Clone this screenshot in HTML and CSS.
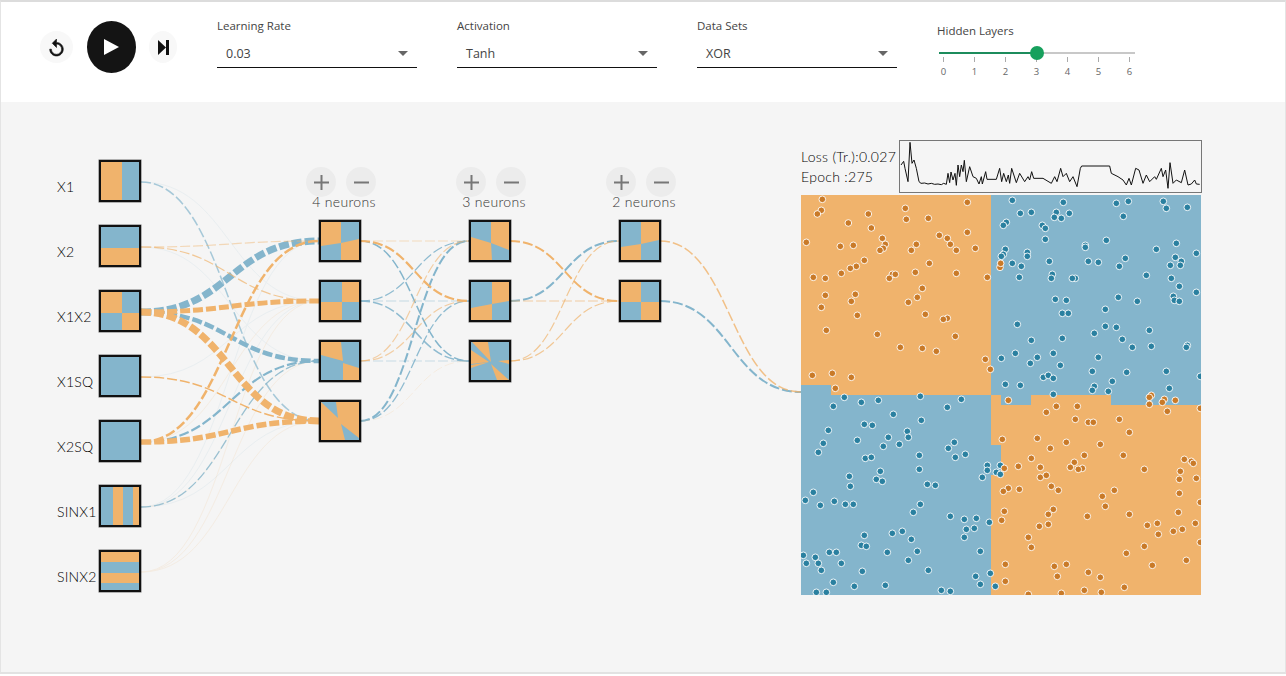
FILE: index.html
```html
<!DOCTYPE html>
<html lang="en">
<head>
<meta charset="utf-8">
<title>Neural Network Playground</title>
<link rel="stylesheet" href="styles.css">
</head>
<body>
<div class="app">
  <header class="toolbar">
    <div class="transport">
      <button class="round small reset" type="button" aria-label="Reset">
        <svg class="icon-reset" viewBox="4 1 16 20"><path d="M12 5V1L7 6l5 5V7c3.31 0 6 2.69 6 6s-2.69 6-6 6-6-2.69-6-6H4c0 4.42 3.58 8 8 8s8-3.58 8-8-3.58-8-8-8z"/></svg>
      </button>
      <button class="round play" type="button" aria-label="Play">
        <svg class="icon-play" viewBox="0 0 15 16"><path d="M0 0L15 8L0 16z"/></svg>
      </button>
      <button class="round small step" type="button" aria-label="Step">
        <svg class="icon-step" viewBox="0 0 11 15"><path d="M0 0L8 7.5L0 15zM8 0h3v15H8z"/></svg>
      </button>
    </div>
    <div class="field">
      <div class="field-label">Learning Rate</div>
      <div class="select"><span>0.03</span><i class="caret"></i></div>
    </div>
    <div class="field">
      <div class="field-label">Activation</div>
      <div class="select"><span>Tanh</span><i class="caret"></i></div>
    </div>
    <div class="field">
      <div class="field-label">Data Sets</div>
      <div class="select"><span>XOR</span><i class="caret"></i></div>
    </div>
    <div class="slider">
      <div class="slider-label">Hidden Layers</div>
      <div class="track"><div class="track-fill"></div><div class="thumb"></div></div>
      <div class="ticks">
        <div class="tick">0</div><div class="tick">1</div><div class="tick">2</div><div class="tick">3</div><div class="tick">4</div><div class="tick">5</div><div class="tick">6</div>
      </div>
    </div>
  </header>

  <main class="stage">
    <svg class="edges" viewBox="1 102 1284 570" aria-hidden="true">
      <g class="faint-b">
        <path d="M141 377C230 377 230 301 319 301"/>
        <path d="M141 507C230 507 230 241 319 241"/>
        <path d="M141 507C230 507 230 301 319 301"/>
        <path d="M141 507C230 507 230 421 319 421"/>
        <path d="M141 247C230 247 230 361 319 361"/>
        <path d="M141 182C230 182 230 301 319 301"/>
      </g>
      <g class="faint-o">
        <path d="M141 572C230 572 230 421 319 421"/>
        <path d="M141 572C230 572 230 361 319 361"/>
        <path d="M141 572C230 572 230 301 319 301"/>
        <path d="M141 442C230 442 230 301 319 301"/>
        <path d="M141 507C230 507 230 361 319 361"/>
      </g>
      <g class="blue">
        <path d="M141 182C230 182 230 421 319 421" stroke-width="1.500" opacity=".7"/>
        <path d="M141 312C230 312 230 241 319 241" stroke-width="7"/>
        <path d="M141 312C230 312 230 361 319 361" stroke-width="4.500"/>
        <path d="M141 442C230 442 230 361 319 361" stroke-width="2.200"/>
        <path d="M141 507C230 507 230 361 319 361" stroke-width="1.300" opacity=".8"/>
        <path d="M360 241C414.500 241 414.500 361 469 361" stroke-width="1.500"/>
        <path d="M360 301C414.500 301 414.500 241 469 241" stroke-width="1.200" opacity=".9"/>
        <path d="M360 301C414.500 301 414.500 301 469 301" stroke-width="1.200" opacity=".45"/>
        <path d="M360 301C414.500 301 414.500 361 469 361" stroke-width="1.500" opacity=".9"/>
        <path d="M360 361C414.500 361 414.500 361 469 361" stroke-width="1.200" opacity=".4"/>
        <path d="M360 421C414.500 421 414.500 241 469 241" stroke-width="2"/>
        <path d="M360 421C414.500 421 414.500 301 469 301" stroke-width="1.300" opacity=".9"/>
        <path d="M510 301C564.500 301 564.500 241 619 241" stroke-width="2"/>
        <path d="M660 301C730.500 301 730.500 392 801 392" stroke-width="2"/>
      </g>
      <g class="orange">
        <path d="M141 247C230 247 230 241 319 241" stroke-width="1.200" opacity=".45"/>
        <path d="M141 247C230 247 230 301 319 301" stroke-width="1.200" opacity=".7"/>
        <path d="M141 312C230 312 230 301 319 301" stroke-width="5"/>
        <path d="M141 312C230 312 230 421 319 421" stroke-width="7"/>
        <path d="M141 377C230 377 230 421 319 421" stroke-width="1.500"/>
        <path d="M141 442C230 442 230 421 319 421" stroke-width="5.500"/>
        <path d="M141 442C230 442 230 241 319 241" stroke-width="2.500"/>
        <path d="M360 241C414.500 241 414.500 241 469 241" stroke-width="1.200" opacity=".4"/>
        <path d="M360 241C414.500 241 414.500 301 469 301" stroke-width="2.200"/>
        <path d="M360 361C414.500 361 414.500 241 469 241" stroke-width="1.200" opacity=".6"/>
        <path d="M360 361C414.500 361 414.500 301 469 301" stroke-width="1.200" opacity=".6"/>
        <path d="M360 421C414.500 421 414.500 361 469 361" stroke-width="1" opacity=".15"/>
        <path d="M510 241C564.500 241 564.500 301 619 301" stroke-width="2"/>
        <path d="M510 301C564.500 301 564.500 301 619 301" stroke-width="1.200" opacity=".6"/>
        <path d="M510 361C564.500 361 564.500 241 619 241" stroke-width="1.200" opacity=".7"/>
        <path d="M510 361C564.500 361 564.500 301 619 301" stroke-width="1.200" opacity=".7"/>
        <path d="M660 241C730.500 241 730.500 392 801 392" stroke-width="1.500" opacity=".8"/>
      </g>
    </svg>

    <section class="inputs">
      <div class="input-row"><span class="input-name">X1</span>
        <div class="node"><svg class="map" viewBox="0 0 38 38"><rect class="bg-o" width="38" height="38"/><rect class="bg-b" x="21" width="17" height="38"/></svg></div></div>
      <div class="input-row"><span class="input-name">X2</span>
        <div class="node"><svg class="map" viewBox="0 0 38 38"><rect class="bg-b" width="38" height="38"/><rect class="bg-o" y="21" width="38" height="17"/></svg></div></div>
      <div class="input-row"><span class="input-name">X1X2</span>
        <div class="node"><svg class="map" viewBox="0 0 38 38"><rect class="bg-b" width="38" height="38"/><rect class="bg-o" width="21" height="21"/><rect class="bg-o" x="21" y="21" width="17" height="17"/></svg></div></div>
      <div class="input-row"><span class="input-name">X1SQ</span>
        <div class="node"><svg class="map" viewBox="0 0 38 38"><rect class="bg-b" width="38" height="38"/></svg></div></div>
      <div class="input-row"><span class="input-name">X2SQ</span>
        <div class="node"><svg class="map" viewBox="0 0 38 38"><rect class="bg-b" width="38" height="38"/></svg></div></div>
      <div class="input-row"><span class="input-name">SINX1</span>
        <div class="node"><svg class="map" viewBox="0 0 38 38"><rect class="bg-b" width="38" height="38"/><rect class="bg-o" x="12" width="10" height="38"/><rect class="bg-o" x="32" width="6" height="38"/></svg></div></div>
      <div class="input-row"><span class="input-name">SINX2</span>
        <div class="node"><svg class="map" viewBox="0 0 38 38"><rect class="bg-b" width="38" height="38"/><rect class="bg-o" width="38" height="10"/><rect class="bg-o" y="21" width="38" height="10"/></svg></div></div>
    </section>

    <section class="layer">
      <div class="layer-buttons">
        <button class="adjust" type="button" aria-label="Add neuron"><svg class="adjust-icon" viewBox="0 0 15 15"><path d="M7.500 0V15M0 7.500H15"/></svg></button>
        <button class="adjust" type="button" aria-label="Remove neuron"><svg class="adjust-icon" viewBox="0 0 15 15"><path d="M0 7.500H15"/></svg></button>
      </div>
      <div class="layer-count">4 neurons</div>
      <div class="layer-nodes">
        <div class="node"><svg class="map" viewBox="0 0 38 38"><rect class="bg-b" width="38" height="38"/><path class="bg-o" d="M0 0H20V21L0 24zM20 21L38 17V38H20z"/></svg></div>
        <div class="node"><svg class="map" viewBox="0 0 38 38"><rect class="bg-b" width="38" height="38"/><path class="bg-o" d="M21 0H38V20H21zM0 20H21V38H0z"/></svg></div>
        <div class="node"><svg class="map" viewBox="0 0 38 38"><rect class="bg-b" width="38" height="38"/><path class="bg-o" d="M0 0H20L22 19L0 13zM22 21L38 26V38H22z"/></svg></div>
        <div class="node"><svg class="map" viewBox="0 0 38 38"><rect class="bg-o" width="38" height="38"/><path class="bg-b" d="M0 0H15L17 16zM20 22L38 36V38H24z"/></svg></div>
      </div>
    </section>

    <section class="layer">
      <div class="layer-buttons">
        <button class="adjust" type="button" aria-label="Add neuron"><svg class="adjust-icon" viewBox="0 0 15 15"><path d="M7.500 0V15M0 7.500H15"/></svg></button>
        <button class="adjust" type="button" aria-label="Remove neuron"><svg class="adjust-icon" viewBox="0 0 15 15"><path d="M0 7.500H15"/></svg></button>
      </div>
      <div class="layer-count">3 neurons</div>
      <div class="layer-nodes">
        <div class="node"><svg class="map" viewBox="0 0 38 38"><rect class="bg-b" width="38" height="38"/><path class="bg-o" d="M20 0H38V28L20 21zM0 15L20 21L21 38H0z"/></svg></div>
        <div class="node"><svg class="map" viewBox="0 0 38 38"><rect class="bg-b" width="38" height="38"/><path class="bg-o" d="M21 0H38V19L21 22zM0 26L21 22V38H0z"/></svg></div>
        <div class="node"><svg class="map" viewBox="0 0 38 38"><rect class="bg-b" width="38" height="38"/><path class="bg-o" d="M1 0H17L20 20zM0 8L18 20L0 22zM0 23L18 20L0 26zM27 19L38 18V22zM20 22L38 38H26z"/></svg></div>
      </div>
    </section>

    <section class="layer">
      <div class="layer-buttons">
        <button class="adjust" type="button" aria-label="Add neuron"><svg class="adjust-icon" viewBox="0 0 15 15"><path d="M7.500 0V15M0 7.500H15"/></svg></button>
        <button class="adjust" type="button" aria-label="Remove neuron"><svg class="adjust-icon" viewBox="0 0 15 15"><path d="M0 7.500H15"/></svg></button>
      </div>
      <div class="layer-count">2 neurons</div>
      <div class="layer-nodes">
        <div class="node"><svg class="map" viewBox="0 0 38 38"><rect class="bg-b" width="38" height="38"/><path class="bg-o" d="M20 0H38V18L20 22zM0 25L20 22V38H0z"/></svg></div>
        <div class="node"><svg class="map" viewBox="0 0 38 38"><rect class="bg-b" width="38" height="38"/><path class="bg-o" d="M0 0H20V20H0zM20 20H38V38H20z"/></svg></div>
      </div>
    </section>

    <section class="output">
      <div class="stats">
        <div class="stat-text"><div>Loss (Tr.):0.027</div><div>Epoch :275</div></div>
        <div class="chart">
          <svg class="chart-line" viewBox="121 423 903 153" preserveAspectRatio="none"><polyline points="124,495 132,484 136,505 145,545 151,427 157,490 163,480 170,505 178,545 184,550 195,549 205,552 215,550 225,553 235,552 245,554 252,550 260,553 265,520 270,548 274,516 280,540 286,520 290,556 295,495 300,530 305,495 310,515 314,481 320,545 330,500 340,530 350,535 358,552 365,530 368,552 378,515 382,538 410,538 420,505 426,545 432,520 440,545 446,525 450,550 456,505 470,548 480,520 495,545 505,530 510,540 516,515 522,535 550,535 575,550 585,530 592,545 603,505 610,530 620,520 630,545 640,530 652,560 662,505 666,498 750,498 755,520 775,530 790,540 800,555 808,535 815,555 828,505 838,510 850,550 860,525 870,545 885,530 890,538 905,505 910,530 918,510 925,565 931,488 940,550 950,540 965,548 975,510 985,555 995,552 1005,540 1010,552 1020,553"/></svg>
        </div>
      </div>
      <svg class="decision" viewBox="801 195 400 400" role="img" aria-label="Decision boundary">
        <rect class="bg-b" x="801" y="195" width="400" height="400"/>
        <path class="bg-o" d="M801 195H991V395H831V385H801z"/>
        <path class="bg-o" d="M991 395H1001V405H1031V395H1111V405H1201V595H991V475H1001V445H991z"/>
        <g class="dots-o" transform="translate(800 190) scale(.33333)">
          <circle cx="67" cy="28"/><circle cx="64" cy="61"/><circle cx="52" cy="72"/><circle cx="205" cy="72"/><circle cx="316" cy="55"/><circle cx="319" cy="88"/><circle cx="385" cy="85"/><circle cx="502" cy="37"/><circle cx="145" cy="99"/><circle cx="214" cy="114"/><circle cx="502" cy="127"/><circle cx="418" cy="136"/><circle cx="442" cy="145"/><circle cx="247" cy="145"/><circle cx="19" cy="157"/><circle cx="121" cy="169"/><circle cx="160" cy="166"/><circle cx="256" cy="163"/><circle cx="250" cy="175"/><circle cx="240" cy="181"/><circle cx="349" cy="163"/><circle cx="334" cy="181"/><circle cx="451" cy="163"/><circle cx="469" cy="181"/><circle cx="526" cy="175"/><circle cx="193" cy="211"/><circle cx="169" cy="229"/><circle cx="151" cy="235"/><circle cx="124" cy="250"/><circle cx="388" cy="220"/><circle cx="346" cy="247"/><circle cx="469" cy="250"/><circle cx="562" cy="262"/><circle cx="40" cy="262"/><circle cx="76" cy="265"/><circle cx="277" cy="253"/><circle cx="286" cy="253"/><circle cx="268" cy="265"/><circle cx="367" cy="295"/><circle cx="76" cy="316"/><circle cx="166" cy="313"/><circle cx="154" cy="334"/><circle cx="352" cy="322"/><circle cx="325" cy="337"/><circle cx="64" cy="352"/><circle cx="172" cy="376"/><circle cx="376" cy="373"/><circle cx="442" cy="385"/><circle cx="430" cy="388"/><circle cx="79" cy="421"/><circle cx="232" cy="433"/><circle cx="466" cy="439"/><circle cx="301" cy="472"/><circle cx="367" cy="475"/><circle cx="409" cy="484"/><circle cx="556" cy="508"/><circle cx="571" cy="538"/><circle cx="37" cy="556"/><circle cx="97" cy="550"/><circle cx="154" cy="562"/><circle cx="106" cy="595"/>
        </g>
        <g class="dots-b" transform="translate(1000 190) scale(.33333)">
          <circle cx="37" cy="31"/><circle cx="190" cy="37"/><circle cx="349" cy="40"/><circle cx="385" cy="34"/><circle cx="490" cy="34"/><circle cx="499" cy="55"/><circle cx="562" cy="52"/><circle cx="61" cy="70"/><circle cx="94" cy="67"/><circle cx="169" cy="67"/><circle cx="163" cy="82"/><circle cx="184" cy="85"/><circle cx="208" cy="70"/><circle cx="370" cy="79"/><circle cx="19" cy="97"/><circle cx="10" cy="106"/><circle cx="127" cy="106"/><circle cx="136" cy="115"/><circle cx="136" cy="148"/><circle cx="319" cy="151"/><circle cx="256" cy="166"/><circle cx="256" cy="172"/><circle cx="529" cy="160"/><circle cx="469" cy="178"/><circle cx="16" cy="178"/><circle cx="10" cy="193"/><circle cx="4" cy="199"/><circle cx="82" cy="187"/><circle cx="82" cy="199"/><circle cx="589" cy="190"/><circle cx="526" cy="202"/><circle cx="376" cy="205"/><circle cx="544" cy="214"/><circle cx="541" cy="226"/><circle cx="511" cy="226"/><circle cx="148" cy="214"/><circle cx="265" cy="214"/><circle cx="295" cy="217"/><circle cx="37" cy="220"/><circle cx="64" cy="229"/><circle cx="358" cy="229"/><circle cx="157" cy="253"/><circle cx="154" cy="265"/><circle cx="226" cy="265"/><circle cx="217" cy="265"/><circle cx="58" cy="262"/><circle cx="439" cy="256"/><circle cx="514" cy="265"/><circle cx="538" cy="289"/><circle cx="589" cy="307"/><circle cx="520" cy="319"/><circle cx="523" cy="331"/><circle cx="538" cy="334"/><circle cx="166" cy="328"/><circle cx="199" cy="331"/><circle cx="355" cy="322"/><circle cx="412" cy="334"/><circle cx="316" cy="358"/><circle cx="187" cy="370"/><circle cx="205" cy="370"/><circle cx="52" cy="403"/><circle cx="316" cy="409"/><circle cx="349" cy="412"/><circle cx="283" cy="430"/><circle cx="448" cy="421"/><circle cx="187" cy="445"/><circle cx="94" cy="451"/><circle cx="367" cy="448"/><circle cx="397" cy="472"/><circle cx="454" cy="469"/><circle cx="562" cy="466"/><circle cx="559" cy="472"/><circle cx="46" cy="490"/><circle cx="160" cy="490"/><circle cx="4" cy="505"/><circle cx="112" cy="502"/><circle cx="91" cy="520"/><circle cx="295" cy="502"/><circle cx="181" cy="526"/><circle cx="277" cy="544"/><circle cx="380" cy="547"/><circle cx="499" cy="544"/><circle cx="130" cy="562"/><circle cx="145" cy="556"/><circle cx="160" cy="565"/><circle cx="337" cy="574"/><circle cx="601" cy="559"/><circle cx="16" cy="583"/><circle cx="61" cy="586"/><circle cx="283" cy="589"/><circle cx="277" cy="601"/><circle cx="325" cy="604"/><circle cx="508" cy="595"/><circle cx="160" cy="613"/>
        </g>
        <g class="dots-o" transform="translate(1000 190) scale(.33333)">
          <circle cx="0" cy="232"/><circle cx="2" cy="220"/>
        </g>
        <g class="dots-b" transform="translate(800 390) scale(.33333)">
          <circle cx="133" cy="22"/><circle cx="184" cy="37"/><circle cx="235" cy="31"/><circle cx="361" cy="19"/><circle cx="484" cy="28"/><circle cx="100" cy="49"/><circle cx="442" cy="52"/><circle cx="280" cy="73"/><circle cx="364" cy="91"/><circle cx="193" cy="103"/><circle cx="217" cy="106"/><circle cx="85" cy="121"/><circle cx="322" cy="124"/><circle cx="265" cy="142"/><circle cx="325" cy="142"/><circle cx="172" cy="151"/><circle cx="70" cy="160"/><circle cx="298" cy="163"/><circle cx="250" cy="169"/><circle cx="463" cy="157"/><circle cx="445" cy="175"/><circle cx="55" cy="187"/><circle cx="358" cy="196"/><circle cx="496" cy="193"/><circle cx="466" cy="202"/><circle cx="196" cy="205"/><circle cx="214" cy="202"/><circle cx="562" cy="226"/><circle cx="601" cy="226"/><circle cx="562" cy="241"/><circle cx="589" cy="247"/><circle cx="601" cy="253"/><circle cx="241" cy="244"/><circle cx="358" cy="238"/><circle cx="148" cy="259"/><circle cx="229" cy="268"/><circle cx="247" cy="274"/><circle cx="547" cy="262"/><circle cx="151" cy="289"/><circle cx="382" cy="283"/><circle cx="406" cy="286"/><circle cx="40" cy="307"/><circle cx="16" cy="331"/><circle cx="103" cy="334"/><circle cx="61" cy="346"/><circle cx="136" cy="343"/><circle cx="160" cy="343"/><circle cx="361" cy="343"/><circle cx="340" cy="367"/><circle cx="451" cy="379"/><circle cx="493" cy="388"/><circle cx="529" cy="385"/><circle cx="568" cy="397"/><circle cx="499" cy="418"/><circle cx="523" cy="415"/><circle cx="493" cy="442"/><circle cx="193" cy="436"/><circle cx="277" cy="430"/><circle cx="307" cy="424"/><circle cx="334" cy="448"/><circle cx="184" cy="466"/><circle cx="199" cy="469"/><circle cx="88" cy="487"/><circle cx="109" cy="487"/><circle cx="262" cy="487"/><circle cx="352" cy="484"/><circle cx="10" cy="496"/><circle cx="46" cy="502"/><circle cx="541" cy="484"/><circle cx="19" cy="520"/><circle cx="55" cy="520"/><circle cx="124" cy="520"/><circle cx="325" cy="511"/><circle cx="64" cy="541"/><circle cx="187" cy="544"/><circle cx="385" cy="541"/><circle cx="571" cy="550"/><circle cx="527" cy="559"/><circle cx="100" cy="577"/><circle cx="163" cy="589"/><circle cx="256" cy="586"/><circle cx="541" cy="583"/><circle cx="586" cy="589"/><circle cx="424" cy="601"/><circle cx="451" cy="604"/><circle cx="49" cy="607"/><circle cx="79" cy="607"/>
        </g>
        <g class="dots-o" transform="translate(1000 390) scale(.33333)">
          <circle cx="454" cy="16"/><circle cx="448" cy="22"/><circle cx="493" cy="28"/><circle cx="487" cy="37"/><circle cx="526" cy="31"/><circle cx="448" cy="43"/><circle cx="502" cy="64"/><circle cx="601" cy="55"/><circle cx="25" cy="31"/><circle cx="169" cy="49"/><circle cx="232" cy="49"/><circle cx="139" cy="67"/><circle cx="226" cy="88"/><circle cx="265" cy="97"/><circle cx="280" cy="97"/><circle cx="358" cy="88"/><circle cx="388" cy="127"/><circle cx="112" cy="145"/><circle cx="7" cy="148"/><circle cx="199" cy="157"/><circle cx="301" cy="163"/><circle cx="151" cy="175"/><circle cx="253" cy="196"/><circle cx="370" cy="196"/><circle cx="94" cy="205"/><circle cx="223" cy="217"/><circle cx="55" cy="229"/><circle cx="13" cy="235"/><circle cx="121" cy="232"/><circle cx="211" cy="232"/><circle cx="247" cy="235"/><circle cx="235" cy="238"/><circle cx="433" cy="238"/><circle cx="553" cy="208"/><circle cx="574" cy="214"/><circle cx="580" cy="220"/><circle cx="541" cy="244"/><circle cx="589" cy="265"/><circle cx="538" cy="268"/><circle cx="121" cy="262"/><circle cx="139" cy="256"/><circle cx="154" cy="289"/><circle cx="175" cy="301"/><circle cx="25" cy="295"/><circle cx="10" cy="304"/><circle cx="58" cy="298"/><circle cx="343" cy="301"/><circle cx="307" cy="319"/><circle cx="538" cy="310"/><circle cx="601" cy="337"/><circle cx="316" cy="349"/><circle cx="13" cy="364"/><circle cx="160" cy="358"/><circle cx="145" cy="373"/><circle cx="262" cy="379"/><circle cx="388" cy="373"/><circle cx="535" cy="367"/><circle cx="5" cy="391"/><circle cx="145" cy="403"/><circle cx="118" cy="409"/><circle cx="442" cy="406"/><circle cx="472" cy="400"/><circle cx="586" cy="400"/><circle cx="547" cy="418"/><circle cx="520" cy="424"/><circle cx="475" cy="433"/><circle cx="85" cy="442"/><circle cx="94" cy="472"/><circle cx="433" cy="469"/><circle cx="601" cy="457"/><circle cx="379" cy="490"/><circle cx="559" cy="511"/><circle cx="16" cy="523"/><circle cx="163" cy="529"/><circle cx="199" cy="523"/><circle cx="457" cy="526"/><circle cx="265" cy="547"/><circle cx="172" cy="559"/><circle cx="301" cy="562"/><circle cx="16" cy="574"/><circle cx="373" cy="592"/><circle cx="85" cy="613"/><circle cx="184" cy="610"/><circle cx="253" cy="601"/><circle cx="304" cy="607"/>
        </g>
      </svg>
    </section>
  </main>
</div>
</body>
</html>
```
FILE: styles.css
```css
* { box-sizing: border-box; }

html, body { margin: 0; padding: 0; background: #fff; }

body { font-family: "Open Sans", "Liberation Sans", sans-serif; color: #333; }

.app {
  width: 1286px;
  height: 674px;
  display: flex;
  flex-direction: column;
  overflow: hidden;
  border: 1px solid #e4e4e4;
  border-top: 2px solid #dcdcdc;
  border-bottom: 2px solid #e2e2e2;
}

.toolbar {
  height: 100px;
  flex: none;
  display: flex;
  align-items: flex-start;
  background: #fff;
}

.transport {
  display: flex;
  align-items: center;
  width: 216px;
  height: 52px;
  margin-top: 19px;
  padding-left: 39px;
}

.round {
  border: 0;
  padding: 0;
  border-radius: 50%;
  display: flex;
  align-items: center;
  justify-content: center;
  flex: none;
}

.small { background: #f8f8f8; }

.reset { width: 33px; height: 32px; margin-right: 14px; }
.step { width: 28px; height: 32px; margin-left: 13px; }
.play { width: 49px; height: 52px; background: #141414; }

.icon-reset { width: 15px; height: 17px; fill: #111; stroke: #111; stroke-width: .7px; overflow: visible; }
.icon-play { width: 15px; height: 16px; fill: #fff; }
.icon-step { width: 11px; height: 15px; fill: #111; }

.field { width: 200px; margin-right: 40px; margin-top: 15px; }

.field-label { font-size: 11.500px; line-height: 18px; color: #444; }

.select {
  height: 25px;
  margin-top: 8px;
  padding: 0 9px 4px;
  display: flex;
  align-items: center;
  justify-content: space-between;
  font-size: 12.500px;
  color: #444;
  border-bottom: 1px solid #111;
}

.caret {
  width: 0;
  height: 0;
  border-left: 5px solid transparent;
  border-right: 5px solid transparent;
  border-top: 5px solid #666;
}

.slider { width: 200px; margin-top: 20px; position: relative; }

.slider-label { font-size: 11.500px; line-height: 18px; color: #444; }

.track {
  position: relative;
  height: 2px;
  width: 196px;
  margin: 12px 0 0 2px;
  background: #c8c8c8;
}

.track-fill { width: 98px; height: 2px; background: #1c8c5c; }

.thumb {
  position: absolute;
  left: 91px;
  top: -6px;
  width: 14px;
  height: 14px;
  border-radius: 50%;
  background: #17a05d;
}

.ticks {
  display: flex;
  width: 217px;
  margin: 3px 0 0 -9px;
  justify-content: flex-start;
}

.tick {
  width: 31px;
  padding-top: 8px;
  font-size: 9.500px;
  line-height: 14px;
  color: #666;
  text-align: center;
  background: linear-gradient(#aaa, #aaa) center top / 1px 5px no-repeat;
}

.stage {
  position: relative;
  flex: 1;
  display: flex;
  align-items: flex-start;
  padding: 38px 0 0 56px;
  background: #f5f5f5;
}

.edges {
  position: absolute;
  left: 0;
  top: 0;
  width: 1284px;
  height: 570px;
  fill: none;
  stroke-dasharray: 10 3;
}

.blue { stroke: #84b5cc; }
.orange { stroke: #f0b36c; }
.faint-b { stroke: #84b5cc; stroke-width: 1; opacity: .1; stroke-dasharray: none; }
.faint-o { stroke: #f0b36c; stroke-width: 1; opacity: .13; stroke-dasharray: none; }

.bg-o { fill: #f0b36c; }
.bg-b { fill: #84b5cc; }

.node {
  position: relative;
  width: 42px;
  height: 42px;
  border: 2px solid #111;
  background: #84b5cc;
  box-shadow: 0 0 0 .5px rgba(17, 17, 17, .6);
}

.map { display: block; width: 38px; height: 38px; }

.inputs {
  position: relative;
  width: 84px;
  margin-top: 20px;
  display: flex;
  flex-direction: column;
  gap: 23px;
}

.input-row { display: flex; align-items: flex-start; }

.input-name {
  width: 42px;
  padding-top: 18px;
  font-family: "Lato", sans-serif;
  font-weight: 300;
  font-size: 14px;
  line-height: 18px;
  letter-spacing: .2px;
  color: #000;
}

.layer {
  position: relative;
  width: 150px;
  margin-top: 27px;
  display: flex;
  flex-direction: column;
  align-items: center;
}

.inputs + .layer { margin-left: 124px; }

.layer-buttons { display: flex; gap: 10px; padding-left: 2px; }

.adjust {
  width: 30px;
  height: 30px;
  padding: 0;
  border: 0;
  border-radius: 50%;
  background: #ececec;
  display: flex;
  align-items: center;
  justify-content: center;
}

.adjust-icon { width: 15px; height: 15px; fill: none; stroke: #777; stroke-width: 2px; }

.layer-count {
  height: 23px;
  padding-left: 8px;
  font-family: "Lato", sans-serif;
  font-weight: 300;
  font-size: 14px;
  line-height: 10px;
  letter-spacing: .3px;
  color: #333;
}

.layer-nodes { display: flex; flex-direction: column; gap: 18px; }

.output { position: relative; margin-left: 86px; width: 402px; }

.stats { display: flex; align-items: flex-start; height: 55px; }

.stat-text {
  width: 98px;
  padding-top: 7px;
  font-family: "Lato", sans-serif;
  font-weight: 300;
  font-size: 14px;
  line-height: 20px;
  letter-spacing: .3px;
  color: #000;
  white-space: nowrap;
}

.chart { width: 303px; height: 53px; border: 1px solid #777; }

.chart-line {
  display: block;
  width: 301px;
  height: 51px;
  fill: none;
  stroke: #111;
  stroke-width: 3px;
}

.decision { display: block; width: 400px; height: 400px; }

.dots-o circle, .dots-b circle { r: 10px; stroke: #fff; stroke-width: 3px; stroke-opacity: .9; }
.dots-o circle { fill: #c97a28; }
.dots-b circle { fill: #2a80a0; }
```
